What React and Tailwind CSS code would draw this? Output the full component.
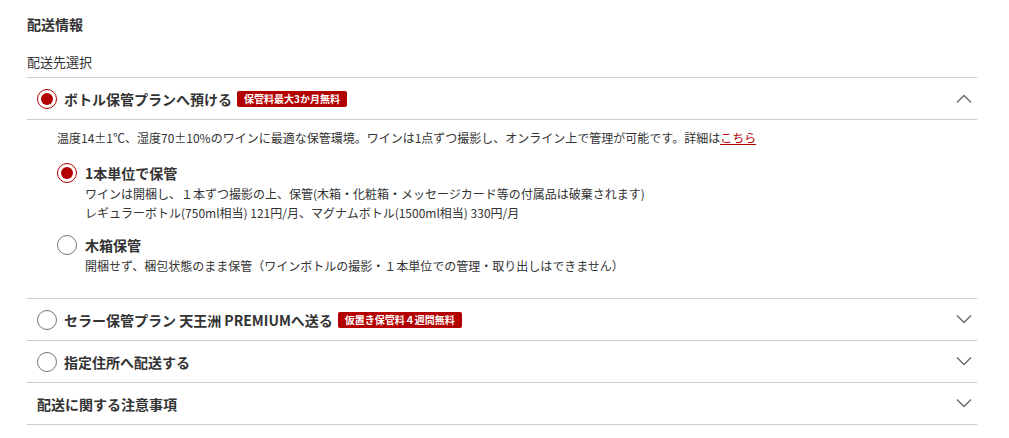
import { useState } from 'react'

const PLANS = [
  {
    id: 'bottle',
    label: 'ボトル保管プランへ預ける',
    badge: '保管料最大3か月無料',
  },
  {
    id: 'cellar',
    label: 'セラー保管プラン 天王洲 PREMIUMへ送る',
    badge: '仮置き保管料４週間無料',
  },
  { id: 'address', label: '指定住所へ配送する' },
]

function Radio({ checked }) {
  return (
    <span
      className={
        'flex h-[20px] w-[20px] shrink-0 items-center justify-center rounded-full border-[1.5px] bg-white ' +
        (checked ? 'border-[#b30000]' : 'border-[#777]')
      }
    >
      {checked && <span className="h-[12px] w-[12px] rounded-full bg-[#b30000]" />}
    </span>
  )
}

function Chevron({ up }) {
  return (
    <svg width="16" height="9" viewBox="0 0 16 9" className="shrink-0">
      <path
        d={up ? 'M1 8.5 L8 1.5 L15 8.5' : 'M1 0.5 L8 7.5 L15 0.5'}
        fill="none"
        stroke="#666"
        strokeWidth="1.3"
      />
    </svg>
  )
}

function Badge({ children }) {
  return (
    <span className="ml-[5px] rounded-[2px] bg-[#b30000] px-[7px] py-[1px] text-[10px] font-bold leading-[14px] text-white">
      {children}
    </span>
  )
}

export default function App() {
  const [plan, setPlan] = useState('bottle')
  const [sub, setSub] = useState('single')

  return (
    <div
      className="w-[1009px] bg-white px-[27px] pt-[14px] text-[#333]"
      style={{ fontFamily: '"Noto Sans CJK JP", "Noto Sans", sans-serif' }}
    >
      <h2 className="text-[14px] font-bold leading-[20px]">配送情報</h2>
      <p className="mt-[19px] text-[13px] leading-[18px]">配送先選択</p>

      <div className="mt-[6px] w-[950px] border-t border-[#ccc]">
        {PLANS.map((p) => {
          const open = p.id === 'bottle'
          return (
            <div key={p.id} className="border-b border-[#ccc]">
              <button
                type="button"
                onClick={() => setPlan(p.id)}
                className="flex h-[41px] w-full items-center pl-[10px] pr-[5px] text-left"
              >
                <Radio checked={plan === p.id} />
                <span className="ml-[7px] text-[14px] font-bold leading-[20px]">{p.label}</span>
                {p.badge && <Badge>{p.badge}</Badge>}
                <span className="flex-1" />
                <Chevron up={open} />
              </button>

              {open && (
                <div className="border-t border-[#ccc] pb-[23px] pl-[30px] pt-[9px]">
                  <p className="text-[12px] leading-[18px]">
                    温度14±1℃、湿度70±10%のワインに最適な保管環境。ワインは1点ずつ撮影し、オンライン上で管理が可能です。詳細は
                    <a href="#" className="text-[#b30000] underline">
                      こちら
                    </a>
                  </p>

                  <div className="mt-[15px] flex flex-col gap-[12px]">
                    <label className="flex items-start" onClick={() => setSub('single')}>
                      <span className="mt-[1px]">
                        <Radio checked={sub === 'single'} />
                      </span>
                      <span className="ml-[8px]">
                        <span className="block text-[14px] font-bold leading-[22px]">1本単位で保管</span>
                        <span className="block text-[12px] leading-[19px]">
                          ワインは開梱し、１本ずつ撮影の上、保管(木箱・化粧箱・メッセージカード等の付属品は破棄されます)
                          <br />
                          レギュラーボトル(750ml相当) 121円/月、マグナムボトル(1500ml相当) 330円/月
                        </span>
                      </span>
                    </label>

                    <label className="flex items-start" onClick={() => setSub('box')}>
                      <span className="mt-[1px]">
                        <Radio checked={sub === 'box'} />
                      </span>
                      <span className="ml-[8px]">
                        <span className="block text-[14px] font-bold leading-[22px]">木箱保管</span>
                        <span className="block text-[12px] leading-[19px]">
                          開梱せず、梱包状態のまま保管（ワインボトルの撮影・１本単位での管理・取り出しはできません）
                        </span>
                      </span>
                    </label>
                  </div>
                </div>
              )}
            </div>
          )
        })}

        <div className="flex h-[42px] items-center border-b border-[#ccc] pl-[10px] pr-[5px]">
          <span className="text-[14px] font-bold leading-[20px]">配送に関する注意事項</span>
          <span className="flex-1" />
          <Chevron />
        </div>
      </div>
      <div className="h-[14px]" />
    </div>
  )
}
